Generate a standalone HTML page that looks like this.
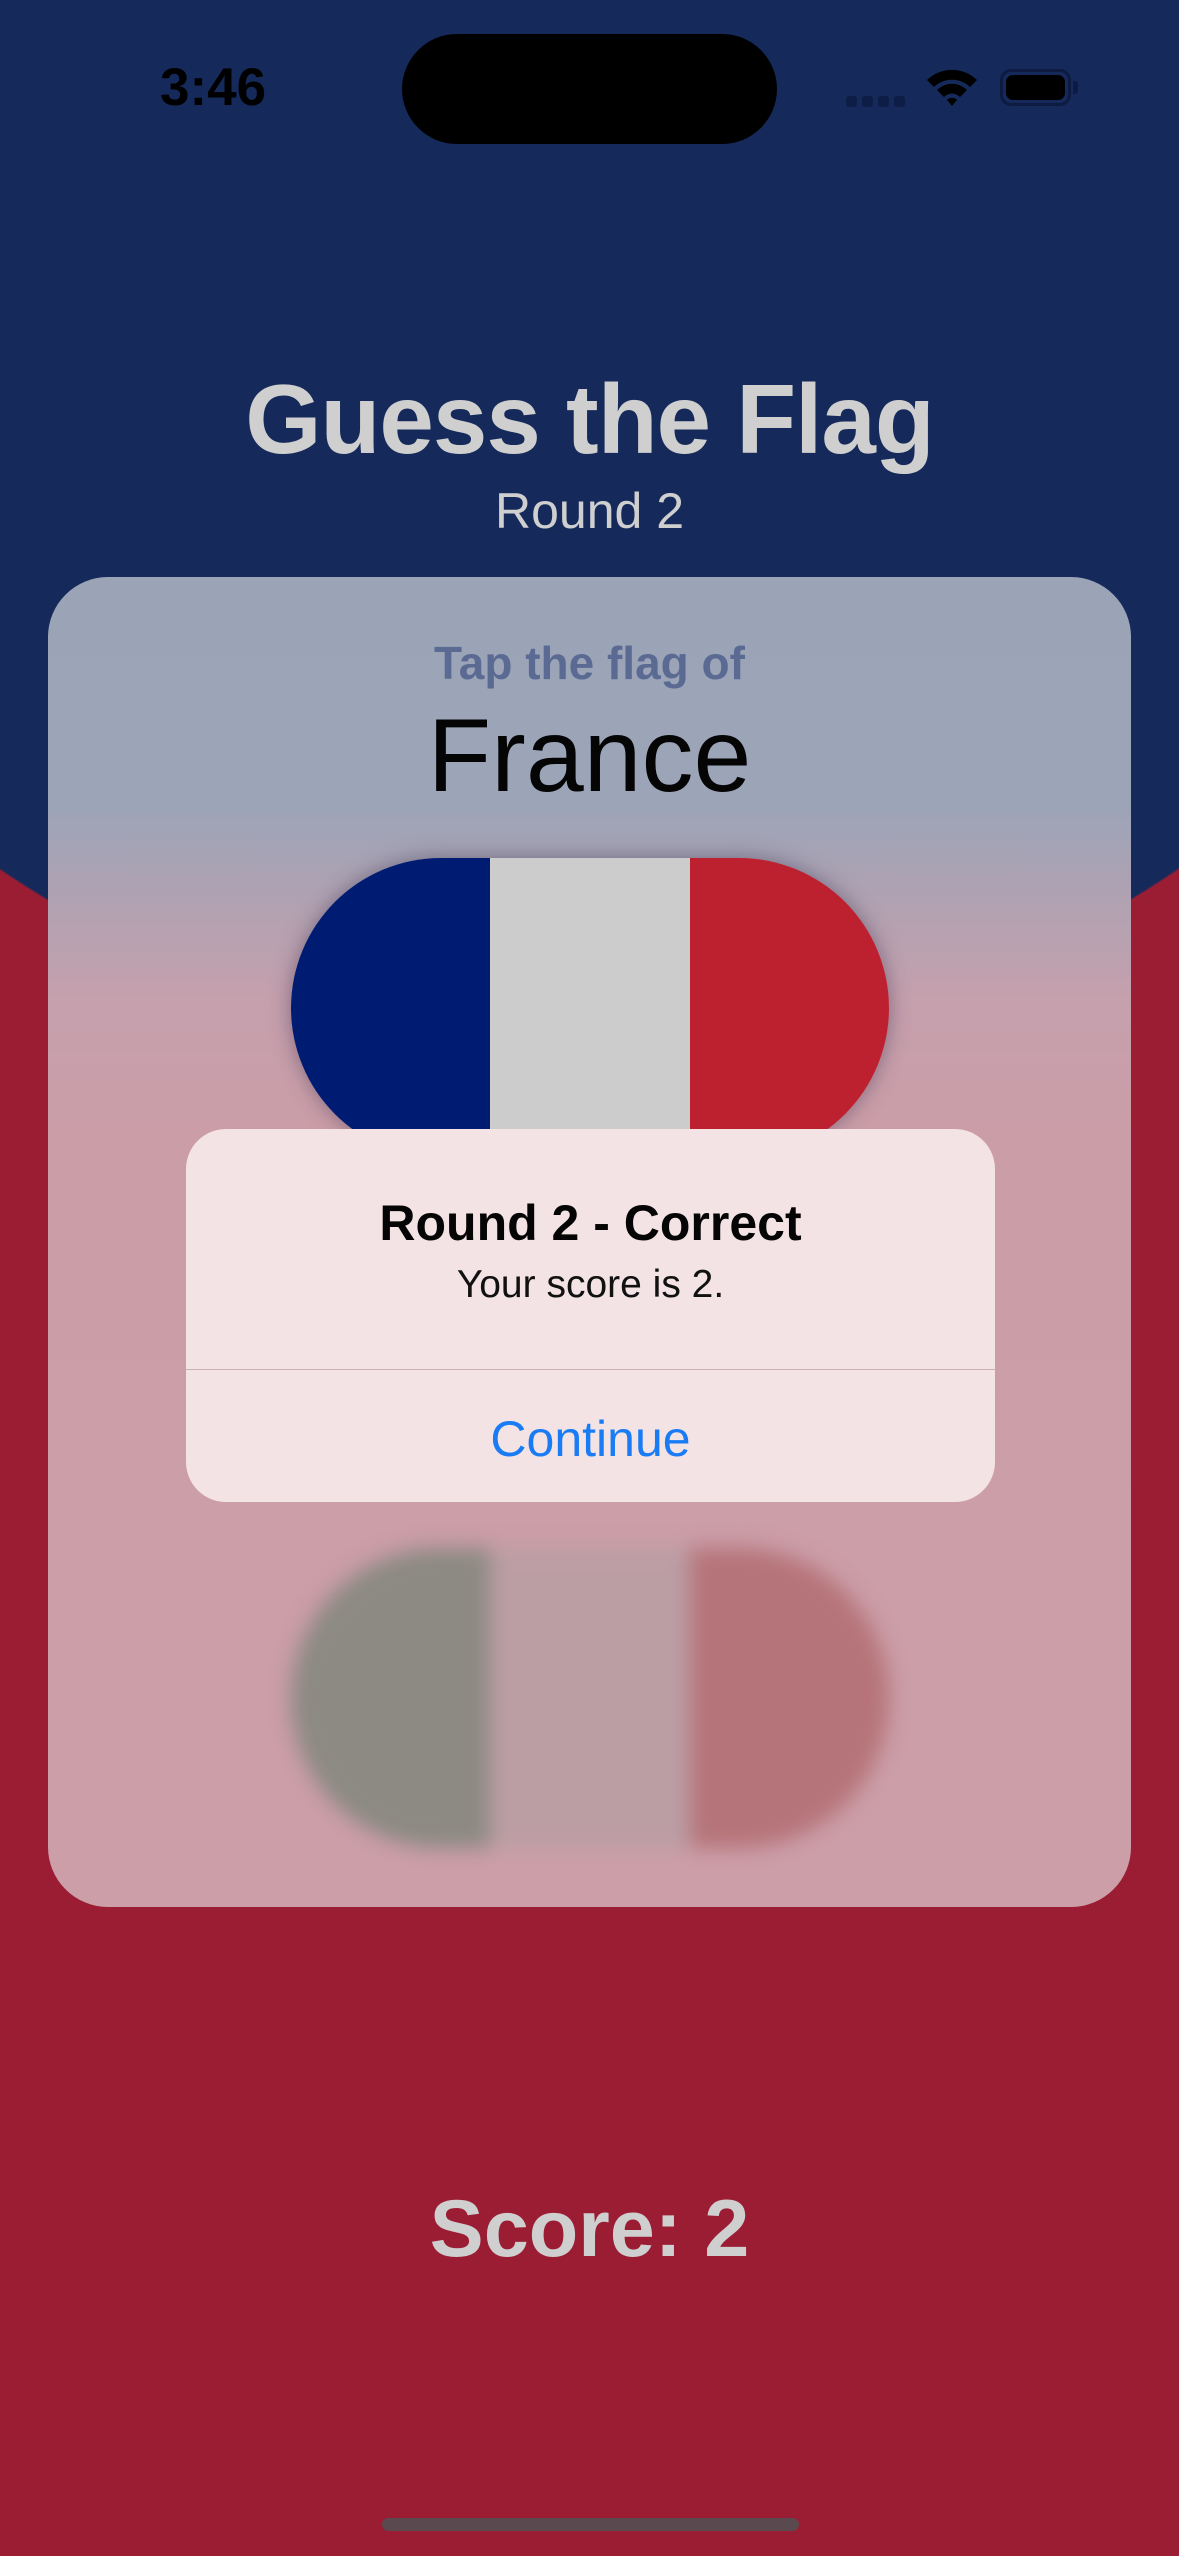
<!DOCTYPE html>
<html><head><meta charset="utf-8"><style>
*{margin:0;padding:0;box-sizing:border-box}
body{width:1179px;height:2556px;overflow:hidden;position:relative;font-family:"Liberation Sans",sans-serif;
background:radial-gradient(circle 1050px at 589px 0px,#152a5a 0,#152a5a 1049px,#9b1d34 1051px)}
.abs{position:absolute}
.c{left:0;width:1179px;text-align:center}
</style></head><body>
<div class="abs" style="left:160px;top:57px;font-size:53px;font-weight:bold;color:#000">3:46</div>
<div class="abs" style="left:402px;top:34px;width:375px;height:110px;border-radius:55px;background:#000"></div>
<div class="abs" style="left:846px;top:96px;width:11px;height:11px;border-radius:3px;background:#0e1d45"></div>
<div class="abs" style="left:862px;top:96px;width:11px;height:11px;border-radius:3px;background:#0e1d45"></div>
<div class="abs" style="left:878px;top:96px;width:11px;height:11px;border-radius:3px;background:#0e1d45"></div>
<div class="abs" style="left:894px;top:96px;width:11px;height:11px;border-radius:3px;background:#0e1d45"></div>
<svg class="abs" style="left:925px;top:66px" width="54" height="42" viewBox="0 0 54 42">
<path d="M2 14 A36 36 0 0 1 52 14 L45 21 A26 26 0 0 0 9 21 Z" fill="#000"/>
<path d="M12 24 A21 21 0 0 1 42 24 L35 31 A11 11 0 0 0 19 31 Z" fill="#000"/>
<path d="M22 34 A7 7 0 0 1 32 34 L27 40 Z" fill="#000"/></svg>
<div class="abs" style="left:1000px;top:69px;width:71px;height:37px;border-radius:11px;border:3px solid #0d1b42;padding:3px"><div style="width:100%;height:100%;background:#000;border-radius:7px"></div></div>
<div class="abs" style="left:1073px;top:81px;width:5px;height:13px;border-radius:0 3px 3px 0;background:#0d1b42"></div>

<div class="abs c" style="top:363px;font-size:98px;font-weight:bold;color:#cfcfcf;letter-spacing:-1px">Guess the Flag</div>
<div class="abs c" style="top:482px;font-size:50px;color:#cfcfcf">Round 2</div>

<div class="abs" style="left:48px;top:577px;width:1083px;height:1330px;border-radius:60px;background:linear-gradient(#9ba4b7 0,#9ca4b7 230px,#c5a0ad 420px,#cb9da7 560px,#cc9ea8 100%)"></div>
<div class="abs c" style="top:636px;font-size:46px;font-weight:bold;color:#5a6a92">Tap the flag of</div>
<div class="abs c" style="top:697px;font-size:104px;color:#050505">France</div>

<div class="abs" style="left:291px;top:858px;width:598px;height:300px;border-radius:150px;overflow:hidden;display:flex;box-shadow:0 0 20px rgba(60,50,80,.5)">
<div style="width:199px;background:#001c72"></div><div style="width:200px;background:#cccccc"></div><div style="flex:1;background:#bd2130"></div></div>

<div class="abs" style="left:291px;top:1548px;width:598px;height:300px;border-radius:150px;overflow:hidden;display:flex;filter:blur(10px)">
<div style="width:199px;background:#8c8a82"></div><div style="width:200px;background:#bb9ea4"></div><div style="flex:1;background:#b57479"></div></div>

<div class="abs" style="left:186px;top:1129px;width:809px;height:373px;border-radius:40px;background:#f3e3e5;overflow:hidden">
<div style="position:absolute;left:0;top:240px;width:100%;height:1px;background:#c9b0b3"></div>
<div style="position:absolute;left:0;top:65px;width:100%;text-align:center;font-size:50px;font-weight:bold;color:#050505">Round 2 - Correct</div>
<div style="position:absolute;left:0;top:134px;width:100%;text-align:center;font-size:39px;color:#111">Your score is 2.</div>
<div style="position:absolute;left:0;top:281px;width:100%;text-align:center;font-size:50px;color:#1a7cf5">Continue</div>
</div>

<div class="abs c" style="top:2183px;font-size:81px;font-weight:bold;color:#cfcfcf">Score: 2</div>
<div class="abs" style="left:382px;top:2518px;width:417px;height:13px;border-radius:7px;background:#5a4a50"></div>
</body></html>
